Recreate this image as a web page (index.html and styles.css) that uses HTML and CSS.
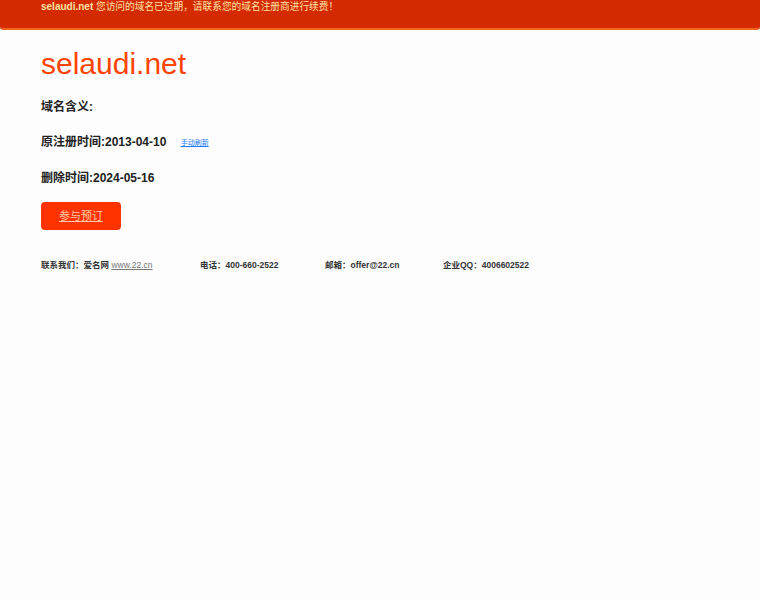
FILE: index.html
```html
<!DOCTYPE html>
<html lang="zh-CN">
  <head>
    <meta charset="UTF-8" />
    <title>selaudi.net</title>
    <link rel="stylesheet" href="styles.css">
  </head>
  <body>
    <div class="topbar">
      <b>selaudi.net</b> 您访问的域名已过期，请联系您的域名注册商进行续费！
    </div>

    <div class="main">
      <h1 class="domain">selaudi.net</h1>
      <h3>域名含义:</h3>
      <h3>原注册时间:2013-04-10 <a href="#" class="refresh">手动刷新</a></h3>
      <h3>删除时间:2024-05-16</h3>
      <a href="#" class="btn">参与预订</a>

      <div class="contact">
        <span class="c1">联系我们：爱名网 <a href="#">www.22.cn</a></span>
        <span class="c2">电话：400-660-2522</span>
        <span class="c3">邮箱：offer@22.cn</span>
        <span class="c4">企业QQ：4006602522</span>
      </div>
    </div>
  </body>
</html>
```

FILE: styles.css
```css
* {
  margin: 0;
  padding: 0;
  box-sizing: border-box;
}

body {
  font-family: 'Liberation Sans', Arial, 'Noto Sans CJK SC', sans-serif;
  background: #fdfdfe;
  color: #222;
}

.topbar {
  height: 30px;
  background: #d42a00;
  border-bottom: 2px solid #f0661c;
  border-radius: 0 0 3px 3px;
  color: #ffe2a8;
  font-size: 9.7px;
  line-height: 13px;
  padding: 0 41px;
}

.topbar b {
  font-weight: 700;
  font-size: 10px;
}

.main {
  padding: 14px 41px 0;
}

.domain {
  font-size: 30px;
  font-weight: 400;
  color: #ff4400;
  line-height: 40px;
  margin-bottom: 14px;
}

h3 {
  font-size: 12px;
  font-weight: 700;
  line-height: 18px;
  margin-bottom: 17px;
  color: #222;
}

.refresh {
  font-size: 7px;
  font-weight: 400;
  color: #1a7cff;
  margin-left: 11px;
  vertical-align: middle;
}

.btn {
  display: inline-block;
  width: 80px;
  height: 28px;
  line-height: 28px;
  margin-top: -2px;
  background: #ff3300;
  border-radius: 4px;
  color: #ffc9a8;
  font-size: 11px;
  text-align: center;
}

.contact {
  display: flex;
  margin-top: 28px;
  font-size: 8.5px;
  font-weight: 700;
  color: #333;
}

.contact a {
  color: #777;
  font-weight: 400;
}

.c1 { width: 159px; }
.c2 { width: 125px; }
.c3 { width: 118px; }
```
